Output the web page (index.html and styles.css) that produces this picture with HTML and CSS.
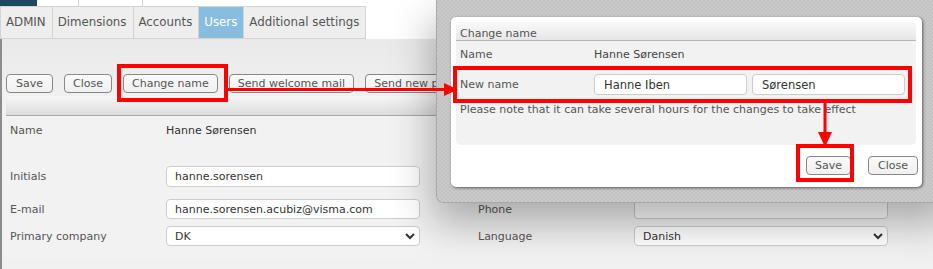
FILE: index.html
```html
<!DOCTYPE html>
<html lang="en">
<head>
    <meta charset="UTF-8">
    <title>Users - Change name</title>
    <link rel="stylesheet" href="styles.css">
</head>
<body>

<div class="app">
    <div class="topbar">
        <span class="top-logo"></span>
        <span class="top-cell"></span>
        <span class="top-cell wide"></span>
    </div>

    <div class="tabs">
        <div class="tab">ADMIN</div>
        <div class="tab">Dimensions</div>
        <div class="tab">Accounts</div>
        <div class="tab active">Users</div>
        <div class="tab">Additional settings</div>
    </div>

    <div class="content">
        <div class="toolbar">
            <button class="btn">Save</button>
            <button class="btn">Close</button>
            <button class="btn">Change name</button>
            <button class="btn">Send welcome mail</button>
            <button class="btn">Send new password</button>
        </div>

        <div class="panel">
            <div class="panel-head"></div>
            <div class="panel-body">
                <div class="form-row row-name">
                    <div class="label">Name</div>
                    <div class="value">Hanne Sørensen</div>
                </div>
                <div class="form-row row-initials">
                    <div class="label">Initials</div>
                    <div class="field">hanne.sorensen</div>
                </div>
                <div class="form-row row-email">
                    <div class="label">E-mail</div>
                    <div class="field">hanne.sorensen.acubiz@visma.com</div>
                    <div class="label">Phone</div>
                    <div class="field"></div>
                </div>
                <div class="form-row row-company">
                    <div class="label">Primary company</div>
                    <div class="field select">DK
                        <svg width="10" height="7" viewBox="0 0 10 7"><polyline points="1,1 5,5 9,1" fill="none" stroke="#333" stroke-width="2"/></svg>
                    </div>
                    <div class="label">Language</div>
                    <div class="field select">Danish
                        <svg width="10" height="7" viewBox="0 0 10 7"><polyline points="1,1 5,5 9,1" fill="none" stroke="#333" stroke-width="2"/></svg>
                    </div>
                </div>
            </div>
        </div>
    </div>
</div>

<!-- modal dialog -->
<div class="overlay">
    <div class="dialog">
        <div class="dialog-panel">
            <div class="dialog-title">Change name</div>
            <div class="dialog-row name-row">
                <div class="dialog-label">Name</div>
                <div class="dialog-value">Hanne Sørensen</div>
            </div>
            <div class="dialog-row new-name">
                <div class="dialog-label">New name</div>
                <div class="field name-input">Hanne Iben</div>
                <div class="field name-input">Sørensen</div>
            </div>
            <div class="note">Please note that it can take several hours for the changes to take effect</div>
        </div>
        <div class="dialog-buttons">
            <button class="btn save">Save</button>
            <button class="btn">Close</button>
        </div>
    </div>
</div>

<!-- red annotations -->
<svg class="marks" width="933" height="269" viewBox="0 0 933 269">
    <rect x="119" y="66" width="107" height="34" fill="none" stroke="#f00" stroke-width="4"/>
    <line x1="228" y1="89.5" x2="446" y2="89.5" stroke="#f00" stroke-width="3"/>
    <polygon points="444,83 458,89.5 444,96" fill="#f00"/>
    <rect x="455" y="68" width="455" height="33" fill="none" stroke="#f00" stroke-width="4"/>
    <line x1="825" y1="103" x2="825" y2="135" stroke="#f00" stroke-width="3"/>
    <polygon points="818,132 832,132 825,147" fill="#f00"/>
    <rect x="798" y="146" width="54" height="34" fill="none" stroke="#f00" stroke-width="4"/>
</svg>

</body>
</html>
```

FILE: styles.css
```css
body {
    margin: 0;
    width: 933px;
    height: 269px;
    overflow: hidden;
    position: relative;
    background: #f8f8f8;
    font-family: "DejaVu Sans", Verdana, sans-serif;
    font-size: 11px;
    color: #444;
}
.topbar {
    height: 6px;
    display: flex;
    background: #fff;
}
.top-logo {
    width: 37px;
    background: #1d4862;
}
.top-cell {
    width: 41px;
    border-right: 1px solid #d4d4d4;
}
.top-cell.wide {
    width: 63px;
}
.tabs {
    display: flex;
    height: 33px;
    background: #fff;
}
.tab {
    padding: 0 6px 0 5px;
    line-height: 31px;
    font-size: 11.8px;
    color: #555;
    background: #eee;
    border: 1px solid #d3d3d3;
    border-left: none;
}
.tab:first-child {
    border-left: 1px solid #d3d3d3;
}
.tab.active {
    background: #88bde0;
    color: #fff;
}
.content {
    border-left: 2px solid #8c8c8c;
    height: 230px;
    background: linear-gradient(#e9e9e9, #f1f1f1 60px);
}
.toolbar {
    display: flex;
    gap: 11px;
    padding: 35px 0 0 4px;
    height: 22px;
}
.btn {
    height: 19px;
    padding: 0 8px;
    font-family: "DejaVu Sans", Verdana, sans-serif;
    font-size: 11px;
    color: #555;
    background: linear-gradient(#fafafa, #f0f0f0);
    border: 1px solid #888;
    border-radius: 4px;
    white-space: nowrap;
}
.toolbar .btn:first-child {
    padding: 0 9px;
}
.panel {
    margin: 0 0 0 4px;
    width: 900px;
}
.panel-head {
    height: 19px;
    border-radius: 4px 4px 0 0;
    background: linear-gradient(#f6f6f6, #dcdcdc);
    border-bottom: 1px solid #a9a9a9;
}
.panel-body {
    height: 143px;
    padding: 4px 0 0 4px;
    box-sizing: border-box;
    background: #f2f2f2;
    border-radius: 0 0 0 6px;
}
.form-row {
    display: grid;
    grid-template-columns: 156px 254px 58px 156px 254px;
    align-items: center;
}
.form-row .label:nth-child(3) {
    grid-column: 4;
}
.label {
    color: #555;
}
.value {
    color: #333;
}
.row-name {
    height: 20px;
    margin-bottom: 26px;
}
.row-initials {
    height: 21px;
    margin-bottom: 12px;
}
.row-email {
    height: 20px;
    margin-bottom: 7px;
}
.row-company {
    height: 20px;
}
.field {
    box-sizing: border-box;
    height: 100%;
    padding: 0 8px;
    display: flex;
    align-items: center;
    justify-content: space-between;
    background: #fff;
    border: 1px solid #ccc;
    border-radius: 4px;
    color: #333;
}
.field.select svg {
    margin-right: -4px;
}

/* dialog */
.overlay {
    position: absolute;
    top: 0;
    left: 436px;
    width: 520px;
    height: 203px;
    box-sizing: border-box;
    padding: 17px 0 0 14px;
    background: repeating-conic-gradient(#c2c2c2 0 25%, #cacaca 0 50%) 0 0 / 4px 4px;
    border-left: 1px solid #a8a8a8;
    border-bottom: 1px solid #a8a8a8;
    border-radius: 0 0 0 7px;
    box-shadow: -4px 20px 40px rgba(0, 0, 0, 0.3);
}
.dialog {
    width: 471px;
    height: 170px;
    box-sizing: border-box;
    padding: 5px 6px 0 5px;
    background: #fff;
    border-radius: 5px;
    box-shadow: 1px 1px 3px rgba(0, 0, 0, 0.55);
}
.dialog-panel {
    height: 123px;
    background: #f2f2f2;
    border-radius: 5px;
}
.dialog-title {
    height: 19px;
    padding: 3px 0 0 4px;
    box-sizing: border-box;
    line-height: 18px;
    color: #555;
    border-radius: 5px 5px 0 0;
    background: linear-gradient(#fafafa, #e6e6e6);
    border-bottom: 1px solid #b5b5b5;
}
.dialog-row {
    display: grid;
    grid-template-columns: 129px 153px 153px;
    column-gap: 5px;
    align-items: center;
    padding-left: 4px;
    color: #555;
}
.name-row {
    height: 24px;
    margin-top: 1px;
}
.dialog-value {
    color: #444;
}
.new-name {
    height: 21px;
    margin-top: 8px;
}
.name-input {
    padding: 0 9px;
    justify-content: flex-start;
    font-size: 11.5px;
}
.note {
    padding: 8px 0 0 4px;
    color: #555;
}
.dialog-buttons {
    display: flex;
    justify-content: flex-end;
    gap: 17px;
    padding: 11px 0 0 0;
    margin-right: -2px;
}
.dialog-buttons .btn {
    padding: 0 9px;
}
.dialog-buttons .btn.save {
    padding: 0 8px;
}

.marks {
    position: absolute;
    top: 0;
    left: 0;
}
```
